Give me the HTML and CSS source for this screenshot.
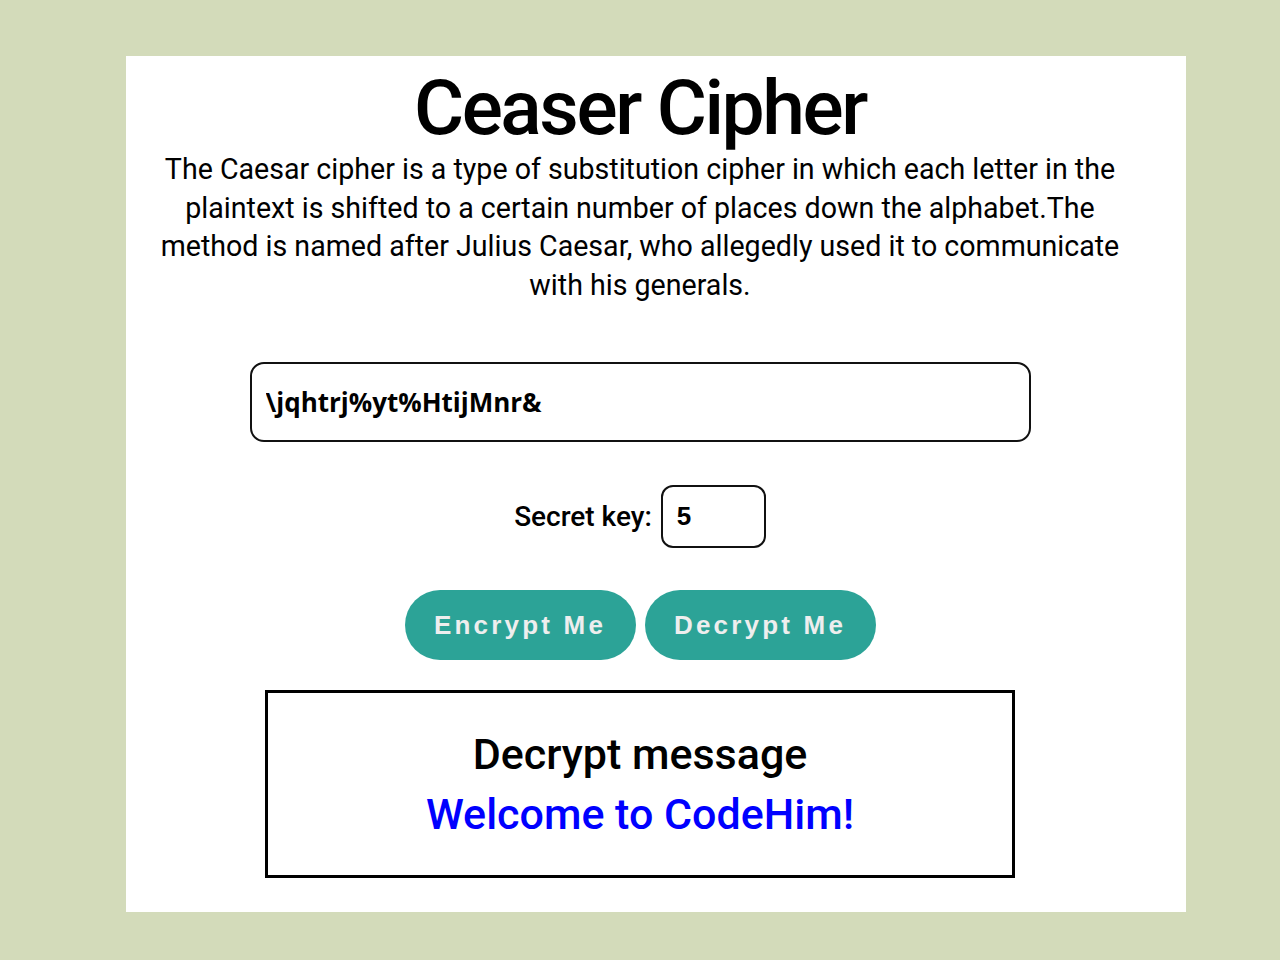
FILE: index.html
```html
<!DOCTYPE html>
<html lang="en">
<head>
<meta charset="utf-8">
<title>Ceaser Cipher</title>
<link rel="stylesheet" href="styles.css">
</head>
<body>
<main class="card">
  <h1 class="title">Ceaser Cipher</h1>
  <p class="intro">The Caesar cipher is a type of substitution cipher in which each letter in the plaintext is shifted to a certain number of places down the alphabet.The method is named after Julius Caesar, who allegedly used it to communicate with his generals.</p>
  <input class="message" type="text" value="\jqhtrj%yt%HtijMnr&amp;">
  <div class="key-row">
    <label class="key-label" for="key">Secret key:</label>
    <input class="key-input" id="key" type="text" value="5">
  </div>
  <div class="actions">
    <button class="btn">Encrypt Me</button>
    <button class="btn">Decrypt Me</button>
  </div>
  <div class="result">
    <div class="result-title">Decrypt message</div>
    <div class="result-text">Welcome to CodeHim!</div>
  </div>
</main>
</body>
</html>
```
FILE: styles.css
```css
html, body {
  margin: 0;
  padding: 0;
}
body {
  background: #d3dbba;
  font-family: Roboto, "Liberation Sans", sans-serif;
  color: #000;
  padding-top: 56px;
  padding-bottom: 48px;
}
.card {
  background: #fff;
  width: 1060px;
  box-sizing: border-box;
  margin-left: 126px;
  padding: 10px 32px 34px 0;
  display: flex;
  flex-direction: column;
  align-items: center;
}
.title {
  margin: 0;
  font-size: 76.8px;
  font-weight: 500;
  line-height: 84px;
  letter-spacing: -2.4px;
}
.intro {
  margin: 0;
  width: 980px;
  text-align: center;
  font-size: 28.6px;
  line-height: 38.5px;
}
.message {
  margin-top: 58px;
  width: 781px;
  height: 80px;
  box-sizing: border-box;
  border: 2px solid #111;
  border-radius: 14px;
  padding: 0 14px;
  font-family: "Open Sans", sans-serif;
  font-weight: 700;
  font-size: 26px;
  color: #000;
  outline: none;
}
.key-row {
  margin-top: 43px;
  display: flex;
  align-items: center;
  gap: 9px;
}
.key-label {
  font-size: 28px;
  font-weight: 500;
  letter-spacing: 0;
}
.key-input {
  width: 105px;
  height: 63px;
  box-sizing: border-box;
  border: 2px solid #111;
  border-radius: 12px;
  padding: 0 14px;
  font-family: "Liberation Sans", Arial, sans-serif;
  font-weight: 700;
  font-size: 26px;
  color: #000;
  outline: none;
}
.actions {
  margin-top: 42px;
  display: flex;
  gap: 9px;
}
.btn {
  width: 231px;
  height: 70px;
  border: none;
  border-radius: 35px;
  background: #2ca397;
  color: #eeeeee;
  font-family: "Liberation Sans", Arial, sans-serif;
  font-weight: 700;
  font-size: 26px;
  letter-spacing: 3.2px;
  padding: 0;
}
.result {
  margin-top: 30px;
  width: 750px;
  box-sizing: border-box;
  border: 3px solid #000;
  padding: 31px 0;
  text-align: center;
}
.result-title,
.result-text {
  font-size: 43px;
  font-weight: 500;
  line-height: 60px;
}
.result-text {
  color: #0000ff;
}
```
